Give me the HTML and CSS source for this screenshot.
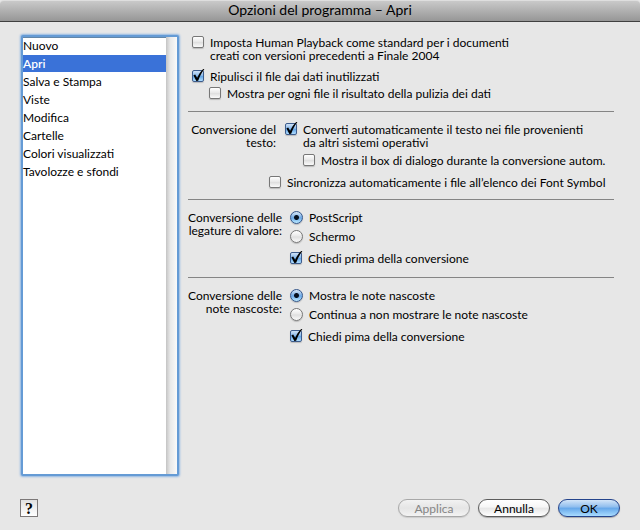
FILE: index.html
```html
<!DOCTYPE html>
<html lang="it">
<head>
<meta charset="utf-8">
<title>Opzioni del programma – Apri</title>
<link rel="stylesheet" href="styles.css">
</head>
<body>
<svg class="defs" aria-hidden="true">
  <symbol id="tick" viewBox="0 0 16 16"><path d="M3.4 7.2 L5.2 6.6 L7.1 9.8 C8.6 6.4 10.6 3.2 13.2 .9 L14.4 1.3 C11.6 4.6 9.6 8.6 8.2 12.8 L6.3 13 Z"/></symbol>
</svg>
<header class="titlebar"><h1>Opzioni del programma – Apri</h1></header>
<form class="window">
  <div class="content">
    <nav class="list" aria-label="Categorie">
      <ul>
        <li><button type="button">Nuovo</button></li>
        <li><button type="button" class="selected" aria-current="page">Apri</button></li>
        <li><button type="button">Salva e Stampa</button></li>
        <li><button type="button">Viste</button></li>
        <li><button type="button">Modifica</button></li>
        <li><button type="button">Cartelle</button></li>
        <li><button type="button">Colori visualizzati</button></li>
        <li><button type="button">Tavolozze e sfondi</button></li>
      </ul>
      <div class="track"></div>
    </nav>
    <main class="panel">
      <section class="general">
        <label class="option"><span class="box"><input type="checkbox"><svg><use href="#tick"/></svg></span><span>Imposta Human Playback come standard per i documenti<br>creati con versioni precedenti a Finale 2004</span></label>
        <label class="option clean"><span class="box"><input type="checkbox" checked><svg><use href="#tick"/></svg></span><span>Ripulisci il file dai dati inutilizzati</span></label>
        <label class="option child"><span class="box"><input type="checkbox"><svg><use href="#tick"/></svg></span><span>Mostra per ogni file il risultato della pulizia dei dati</span></label>
      </section>
      <section class="text">
        <div class="row">
          <h2>Conversione del<br>testo:</h2>
          <div class="choices">
            <label class="option"><span class="box"><input type="checkbox" checked><svg><use href="#tick"/></svg></span><span>Converti automaticamente il testo nei file provenienti<br>da altri sistemi operativi</span></label>
            <label class="option child"><span class="box"><input type="checkbox"><svg><use href="#tick"/></svg></span><span>Mostra il box di dialogo durante la conversione autom.</span></label>
          </div>
        </div>
        <label class="option sync"><span class="box"><input type="checkbox"><svg><use href="#tick"/></svg></span><span>Sincronizza automaticamente i file all’elenco dei Font Symbol</span></label>
      </section>
      <section class="row wide">
        <h2>Conversione delle<br>legature di valore:</h2>
        <div class="choices">
          <label class="option"><input type="radio" name="beams" checked><span>PostScript</span></label>
          <label class="option"><input type="radio" name="beams"><span>Schermo</span></label>
          <label class="option"><span class="box"><input type="checkbox" checked><svg><use href="#tick"/></svg></span><span>Chiedi prima della conversione</span></label>
        </div>
      </section>
      <section class="row wide">
        <h2>Conversione delle<br>note nascoste:</h2>
        <div class="choices">
          <label class="option"><input type="radio" name="hidden" checked><span>Mostra le note nascoste</span></label>
          <label class="option"><input type="radio" name="hidden"><span>Continua a non mostrare le note nascoste</span></label>
          <label class="option"><span class="box"><input type="checkbox" checked><svg><use href="#tick"/></svg></span><span>Chiedi pima della conversione</span></label>
        </div>
      </section>
    </main>
  </div>
  <footer class="footer">
    <button type="button" class="help" aria-label="Aiuto">?</button>
    <button type="button" class="push" disabled>Applica</button>
    <button type="button" class="push">Annulla</button>
    <button type="button" class="push primary">OK</button>
  </footer>
</form>
</body>
</html>
```
FILE: styles.css
```css
* { box-sizing: border-box; }

body {
  margin: 0;
  min-height: 100vh;
  display: flex;
  flex-direction: column;
  background: #e7e7e7;
  color: #000;
  font: 12px/13px "Lucida Grande", Lato, "Noto Sans", sans-serif;
}

.defs { display: none; }

h1, h2, ul { margin: 0; padding: 0; font: inherit; }

button { font: inherit; color: inherit; }

.titlebar {
  height: 22px;
  background: linear-gradient(#c9c9c9, #969696);
  border-top: 1px solid #dedede;
  border-bottom: 1px solid #404040;
  border-radius: 4px 4px 0 0;
  text-align: center;
}

.titlebar h1 { font-size: 14px; line-height: 18px; }

.window {
  flex: 1;
  display: flex;
  flex-direction: column;
  padding: 13px 20px 13px;
}

.content { flex: 1; display: flex; gap: 8px; }

.list {
  width: 158px;
  margin: 0 1px;
  flex: none;
  display: flex;
  background: #fff;
  border: 2px solid #659bd5;
  border-radius: 2px;
  box-shadow: inset 0 1px #6286a8, 0 0 2px 1px #8fb6e3;
}

.list ul { flex: 1; list-style: none; }

.list button {
  display: block;
  width: 100%;
  height: 18px;
  padding: 0 0 1px;
  border: 0;
  background: none;
  text-align: left;
}

.list .selected {
  background: #3a72d8;
  background-clip: content-box;
  color: #fff;
  font-weight: 600;
}

.track { width: 11px; background: linear-gradient(90deg, #c4c4c4, #e9e9e9 40%, #fafafa); }

.panel { flex: 1; padding: 1px 6px 0 0; }

.panel > section { border-bottom: 1px solid #858585; }
.panel > section:last-child { border-bottom: 0; }

.option { display: flex; align-items: flex-start; gap: 6px; }

.box { position: relative; flex: none; display: flex; }

.box svg {
  position: absolute;
  left: -2px;
  top: -2px;
  width: 16px;
  height: 16px;
  pointer-events: none;
  visibility: hidden;
}

.box input:checked + svg { visibility: visible; }

input {
  appearance: none;
  flex: none;
  width: 12px;
  height: 12px;
  margin: 0;
  border: 1px solid #777;
  border-radius: 2px;
  background: linear-gradient(#fff, #e8e8e8 48%, #dedede 52%, #fafafa);
  box-shadow: 0 1px 1px #bbb;
}

input:checked {
  border-color: #3d5c8c;
  background: linear-gradient(#cfe2f7, #86b7ea 48%, #62a4e6 52%, #b0ddff);
}

input[type="radio"] {
  width: 13px;
  height: 13px;
  border-radius: 50%;
}

input[type="radio"]:checked {
  border-color: #34568a;
  background: radial-gradient(circle, #07111f 0 2px, transparent 3px), linear-gradient(#d9e9f8, #7aafe7 48%, #67a7e8 52%, #bceaff);
}

.general { padding: 0 0 11px 4px; }
.clean { margin-top: 8px; }
.general .child { margin: 4px 0 0 17px; }

.row { display: flex; gap: 9px; }
.row h2 { width: 88px; flex: none; text-align: right; white-space: nowrap; }

.text { padding: 11px 0 10px; }
.text .child { margin: 5px 0 0 18px; }
.sync { margin: 9px 0 0 81px; }

.wide { gap: 8px; padding: 11px 0 12px; }
.wide h2 { width: 94px; }
.wide .option + .option { margin-top: 6px; }
.wide .option:last-child { margin-top: 9px; }

.footer { display: flex; gap: 8px; margin-top: 23px; }

.help {
  width: 18px;
  height: 18px;
  margin-right: auto;
  padding: 0;
  border: 1px solid #7c7878;
  background: linear-gradient(#e0e0e0, #fff);
  font: bold 16px/15px "Liberation Serif", serif;
}

.push {
  width: 72px;
  height: 18px;
  padding: 0;
  border: 1px solid #5c5c5c;
  border-radius: 10px;
  background: linear-gradient(#fff, #f6f6f6 45%, #e6e6e6 50%, #fff);
  box-shadow: 0 1px 1px #aaa;
}

.push:disabled { color: #858585; border-color: #a8a8a8; background: linear-gradient(#f2f2f2, #e5e5e5 50%, #f3f3f3); box-shadow: 0 1px 1px #ccc; }

.primary {
  width: 62px;
  border-color: #24448c;
  background: linear-gradient(#d3e5f8, #8dbcee 45%, #64a6e9 50%, #a9dcff);
}
```
